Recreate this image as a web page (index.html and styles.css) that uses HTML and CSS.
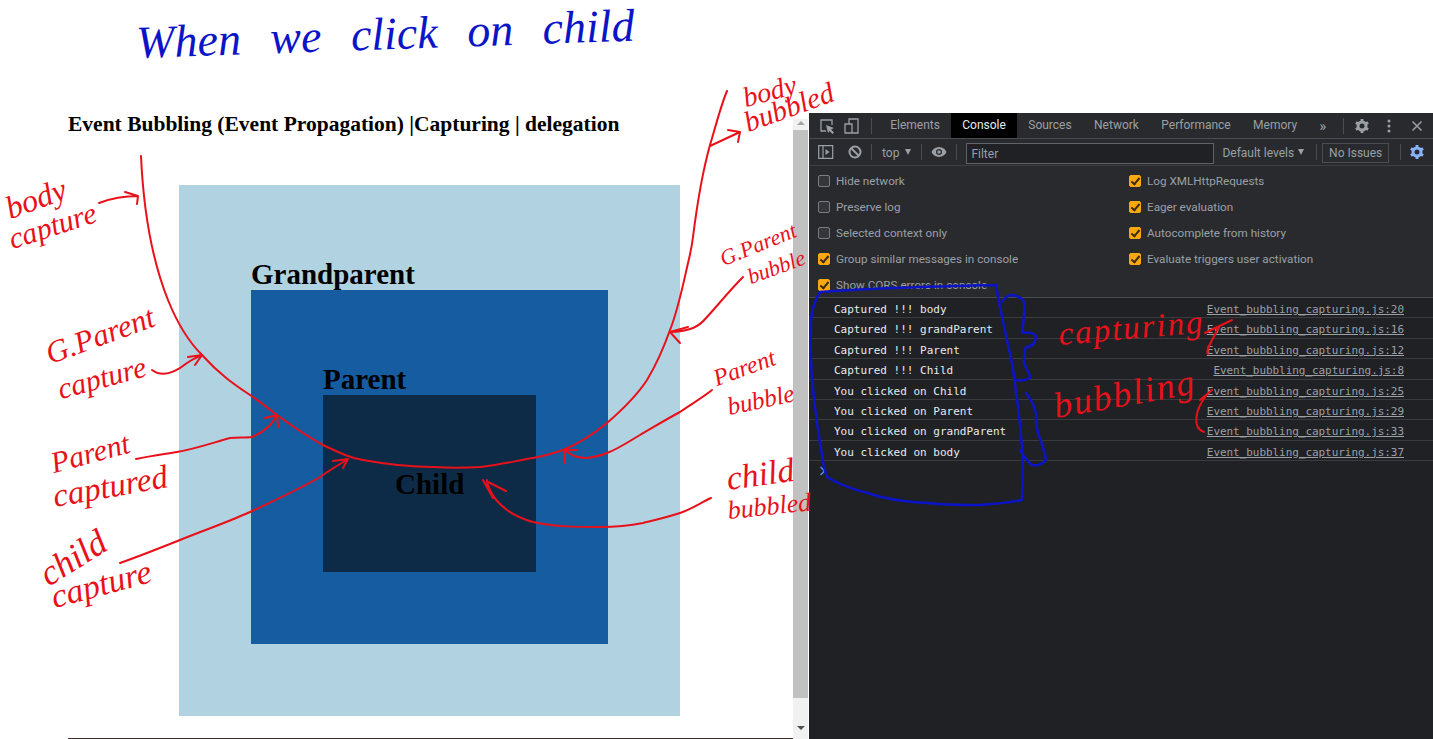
FILE: index.html
```html
<!DOCTYPE html>
<html lang="en">
<head>
    <meta charset="UTF-8">
    <title>Event Bubbling</title>
    <link rel="stylesheet" href="styles.css">
</head>
<body>

    <!-- Demo page -->
    <div class="page">
        <h1>Event Bubbling (Event Propagation) |Capturing | delegation</h1>
        <div class="box grandparent">
            <h2>Grandparent</h2>
            <div class="box parent">
                <h2>Parent</h2>
                <div class="box child">
                    <h2>Child</h2>
                </div>
            </div>
        </div>
        <div class="page-end"></div>
    </div>

    <div class="scrollbar">
        <div class="scroll-arrow up"></div>
        <div class="scroll-thumb"></div>
        <div class="scroll-arrow down"></div>
    </div>

    <!-- Devtools -->
    <div class="devtools">
        <div class="toolbar tabs-bar">
            <svg class="icon inspect" width="18" height="18" viewBox="0 0 18 18"><path d="M8 14H3V3h11v5" fill="none" stroke="#9aa0a6" stroke-width="1.3"/><path d="M8 8l8 3-3 1.5 3 3-1.5 1.500-3-3L10 16z" fill="#9aa0a6"/></svg>
            <svg class="icon device" width="18" height="18" viewBox="0 0 18 18"><path d="M6 7V2h9v14H2V7h7v9" fill="none" stroke="#9aa0a6" stroke-width="1.300"/></svg>
            <span class="sep first"></span>
            <span class="tab">Elements</span>
            <span class="tab active">Console</span>
            <span class="tab">Sources</span>
            <span class="tab">Network</span>
            <span class="tab">Performance</span>
            <span class="tab">Memory</span>
            <span class="more">&raquo;</span>
            <span class="sep"></span>
            <svg class="icon cog" width="16" height="16" viewBox="0 0 16 16"><circle cx="8" cy="8" r="4" fill="none" stroke="#9aa0a6" stroke-width="3"/><path d="M8 1v3M8 12v3M1.900 4.500l2.600 1.500M11.500 10l2.600 1.500M1.900 11.500l2.600-1.500M11.500 6l2.600-1.500" stroke="#9aa0a6" stroke-width="2.800"/></svg>
            <svg class="icon dots" width="4" height="14" viewBox="0 0 4 14"><circle cx="2" cy="2" r="1.500" fill="#9aa0a6"/><circle cx="2" cy="7" r="1.500" fill="#9aa0a6"/><circle cx="2" cy="12" r="1.500" fill="#9aa0a6"/></svg>
            <svg class="icon close" width="12" height="12" viewBox="0 0 12 12"><path d="M1.500 1.500l9 9M10.500 1.500l-9 9" stroke="#9aa0a6" stroke-width="1.500"/></svg>
        </div>

        <div class="toolbar filter-bar">
            <svg class="icon sidebar" width="16" height="14" viewBox="0 0 16 14"><path d="M.7.700h14v12.600H.7zM5 .7v12.600" fill="none" stroke="#9aa0a6" stroke-width="1.200"/><path d="M7.500 4l4 3-4 3z" fill="#9aa0a6"/></svg>
            <svg class="icon block" width="14" height="14" viewBox="0 0 14 14"><circle cx="7" cy="7" r="5.500" fill="none" stroke="#9aa0a6" stroke-width="2"/><path d="M3 3l8 8" stroke="#9aa0a6" stroke-width="2"/></svg>
            <span class="sep"></span>
            <span class="context">top</span>
            <span class="caret"></span>
            <span class="sep"></span>
            <svg class="icon eye" width="16" height="12" viewBox="0 0 16 12"><path d="M8 1C4.500 1 1.700 3.200.5 6c1.200 2.800 4 5 7.500 5s6.300-2.200 7.500-5C14.300 3.200 11.500 1 8 1z" fill="#9aa0a6"/><circle cx="8" cy="6" r="3" fill="#292a2d"/><circle cx="8" cy="6" r="1.700" fill="#9aa0a6"/></svg>
            <span class="sep"></span>
            <div class="filter">Filter</div>
            <span class="levels">Default levels</span>
            <span class="caret"></span>
            <span class="sep"></span>
            <span class="issues">No Issues</span>
            <span class="sep"></span>
            <svg class="icon cog-on" width="16" height="16" viewBox="0 0 16 16"><circle cx="8" cy="8" r="4" fill="none" stroke="#8ab4f8" stroke-width="3"/><path d="M8 1v3M8 12v3M1.900 4.500l2.600 1.500M11.500 10l2.600 1.500M1.900 11.500l2.600-1.500M11.500 6l2.600-1.500" stroke="#8ab4f8" stroke-width="2.800"/></svg>
        </div>

        <div class="settings">
            <label><i class="check"></i>Hide network</label>
            <label><i class="check on"></i>Log XMLHttpRequests</label>
            <label><i class="check"></i>Preserve log</label>
            <label><i class="check on"></i>Eager evaluation</label>
            <label><i class="check"></i>Selected context only</label>
            <label><i class="check on"></i>Autocomplete from history</label>
            <label><i class="check on"></i>Group similar messages in console</label>
            <label><i class="check on"></i>Evaluate triggers user activation</label>
            <label><i class="check on"></i>Show CORS errors in console</label>
        </div>

        <div class="messages">
            <div class="msg"><span>Captured !!! body</span><a>Event_bubbling_capturing.js:20</a></div>
            <div class="msg"><span>Captured !!! grandParent</span><a>Event_bubbling_capturing.js:16</a></div>
            <div class="msg"><span>Captured !!! Parent</span><a>Event_bubbling_capturing.js:12</a></div>
            <div class="msg"><span>Captured !!! Child</span><a>Event_bubbling_capturing.js:8</a></div>
            <div class="msg"><span>You clicked on Child</span><a>Event_bubbling_capturing.js:25</a></div>
            <div class="msg"><span>You clicked on Parent</span><a>Event_bubbling_capturing.js:29</a></div>
            <div class="msg"><span>You clicked on grandParent</span><a>Event_bubbling_capturing.js:33</a></div>
            <div class="msg"><span>You clicked on body</span><a>Event_bubbling_capturing.js:37</a></div>
            <svg class="prompt" width="7" height="10" viewBox="0 0 7 10"><path d="M1.500 1l4 4-4 4" fill="none" stroke="#4d8ff0" stroke-width="1.500"/></svg>
        </div>
    </div>

    <!-- Pen annotations drawn over the screen -->
    <svg class="strokes" width="1433" height="739" viewBox="0 0 1433 739">
        <g class="red">
            <path d="M141 156C143 200 150 255 168 300C178 325 190 343 202 355C220 375 235 385 250 395C265 405 270 410 277 415C295 428 310 438 323 445C340 453 350 458 363 460C385 464 410 467 433 467C450 468 465 468 480 467C500 465 515 461 533 458C545 456 553 453 563 450C580 443 595 433 607 423C622 410 636 397 647 380C656 365 664 347 670 330C678 310 683 285 688 263C690 255 692 245 693 237C697 205 703 170 710 145C716 125 721 105 727 91"/>
            <path d="M99 203C112 198 125 196 138 196M125 192L138 196L137 204"/>
            <path d="M152 370C160 376 172 375 187 363C193 359 198 357 202 355M188 357L202 355L195 365"/>
            <path d="M136 459C150 456 165 454 177 452C195 449 212 443 230 438C238 437 245 438 252 437C262 433 272 425 277 415M265 418L277 415L278 427"/>
            <path d="M120 563C140 556 160 548 180 540C205 530 228 522 250 512C275 500 298 490 320 477C330 470 340 464 348 459M333 461L348 459L343 468"/>
            <path d="M710 146L740 132M728 130L740 132L738 142"/>
            <path d="M743 277C730 290 718 305 707 317C702 323 698 326 693 328C685 331 678 332 670 332M688 327L670 332L680 343"/>
            <path d="M712 390C702 398 690 405 680 412C665 420 652 428 640 435C628 442 618 449 607 453C600 456 594 457 587 458C578 458 570 455 565 450M565 463L565 450L577 450"/>
            <path d="M711 498C700 503 692 509 680 513C668 517 655 520 643 523C628 526 615 527 600 527C578 527 555 527 533 522C522 519 514 515 507 510C499 504 493 497 490 490C488 486 487 483 487 480M483 480L493 498M488 482L506 491"/>
            <path d="M1205 333L1232 320M1218 328C1212 342 1205 350 1208 354M1200 400L1212 390M1206 396C1195 410 1192 428 1204 432"/>
        </g>
        <g class="blue">
            <path d="M996 285C950 286 870 288 820 292C812 305 810 320 811 330C810 350 811 365 812 380C815 410 820 445 824 467L827 477C840 485 855 490 868 493C888 500 908 502 928 503C945 505 962 505 980 505C995 504 1008 503 1022 500C1023 480 1023 465 1022 447C1020 420 1016 390 1012 363C1006 335 1000 310 996 285"/>
            <path d="M1002 302C1005 297 1008 295 1012 295C1020 296 1024 300 1024 303C1025 315 1023 325 1022 333C1028 332 1036 333 1036 337C1035 345 1030 347 1026 347C1024 352 1024 358 1024 363C1025 368 1030 372 1030 378C1025 381 1020 381 1016 380"/>
            <path d="M1026 393C1030 398 1034 405 1036 413C1036 420 1036 427 1038 433C1041 442 1045 452 1046 460C1042 465 1036 466 1032 465C1028 462 1023 455 1020 450"/>
        </g>
    </svg>

    <span class="ink blue-ink title-note">When we click on child</span>
    <span class="ink body-cap-1">body</span>
    <span class="ink body-cap-2">capture</span>
    <span class="ink gp-cap-1">G.Parent</span>
    <span class="ink gp-cap-2">capture</span>
    <span class="ink p-cap-1">Parent</span>
    <span class="ink p-cap-2">captured</span>
    <span class="ink c-cap-1">child</span>
    <span class="ink c-cap-2">capture</span>
    <span class="ink body-bub-1">body</span>
    <span class="ink body-bub-2">bubbled</span>
    <span class="ink gp-bub-1">G.Parent</span>
    <span class="ink gp-bub-2">bubble</span>
    <span class="ink p-bub-1">Parent</span>
    <span class="ink p-bub-2">bubble</span>
    <span class="ink c-bub-1">child</span>
    <span class="ink c-bub-2">bubbled</span>
    <span class="ink note-capturing">capturing</span>
    <span class="ink note-bubbling">bubbling</span>

</body>
</html>
```
FILE: styles.css
```css
html, body {
    margin: 0;
    height: 739px;
    overflow: hidden;
}
body {
    display: flex;
    background-color: white;
    font-family: "Liberation Serif", serif;
    position: relative;
}

/* demo page */
.page {
    width: 725px;
    padding: 113px 0 0 68px;
    flex-shrink: 0;
}
h1 {
    font-size: 21.500px;
    line-height: 23px;
    margin: 0 0 49px;
    color: #000;
}
h2 {
    font-size: 29px;
    line-height: 32px;
    margin: 0;
    color: #000;
}
.box {
    box-sizing: border-box;
    padding: 73px 72px 0;
}
.grandparent {
    background-color: #b1d2e0;
    width: 501px;
    height: 531px;
    margin-left: 111px;
}
.parent {
    background-color: #155ca0;
    width: 357px;
    height: 354px;
}
.child {
    background-color: #0d2b47;
    width: 213px;
    height: 177px;
}
.page-end {
    height: 1px;
    background-color: #3d2f26;
    margin-top: 22px;
}

/* page scrollbar */
.scrollbar {
    width: 15px;
    margin-top: 119px;
    height: 620px;
    background-color: #f1f1f1;
    display: flex;
    flex-direction: column;
    align-items: center;
    flex-shrink: 0;
}
.scroll-arrow {
    width: 0;
    height: 0;
    border-left: 4px solid transparent;
    border-right: 4px solid transparent;
}
.scroll-arrow.up {
    border-bottom: 4px solid #a3a3a3;
    margin: 2px 0 5px;
}
.scroll-thumb {
    width: 100%;
    height: 568px;
    background-color: #c1c1c1;
}
.scroll-arrow.down {
    border-top: 4px solid #505050;
    margin-top: 28px;
}

/* devtools */
.devtools {
    width: 624px;
    margin: 113px 0 0 1px;
    height: 626px;
    background-color: #202124;
    font-family: Roboto, sans-serif;
    font-size: 12px;
    color: #9aa0a6;
    flex-shrink: 0;
}
.toolbar {
    display: flex;
    align-items: center;
    background-color: #292a2d;
    border-bottom: 1px solid #494c50;
    box-sizing: border-box;
}
.tabs-bar {
    height: 26px;
    padding-left: 9px;
}
.filter-bar {
    height: 27px;
    padding-left: 9px;
    border-bottom-color: #3c4043;
}
.icon {
    flex-shrink: 0;
}
.device {
    margin-left: 7px;
}
.sep {
    width: 1px;
    height: 16px;
    background-color: #494c50;
    flex-shrink: 0;
}
.sep.first {
    margin: 0 7px 0 10px;
}
.tab {
    padding: 0 11.200px;
    height: 25px;
    line-height: 25px;
}
.tab.active {
    background-color: #000;
    color: #e8eaed;
}
.more {
    margin-left: 11px;
    font-size: 15px;
    line-height: 20px;
}
.more + .sep {
    margin: 0 10px 0 16.500px;
}
.dots {
    margin-left: 17px;
}
.close {
    margin-left: 20px;
}
.block {
    margin-left: 14px;
}
.filter-bar .block + .sep {
    margin: 0 10px 0 9px;
}
.context, .levels, .filter, .issues {
    position: relative;
    top: 1px;
}
.caret {
    width: 0;
    height: 0;
    border-left: 3.500px solid transparent;
    border-right: 3.500px solid transparent;
    border-top: 6px solid #9aa0a6;
    margin-left: 6px;
}
.levels + .caret {
    margin-left: 4px;
}
.context + .caret + .sep {
    margin: 0 9px 0 10px;
}
.eye + .sep {
    margin: 0 9px 0 9px;
}
.filter {
    box-sizing: border-box;
    width: 248px;
    height: 21px;
    line-height: 20px;
    padding-left: 4px;
    background-color: #202124;
    border: 1px solid #5f6368;
}
.levels {
    margin-left: 8px;
}
.levels + .caret + .sep {
    margin: 0 5px 0 12px;
}
.issues {
    box-sizing: border-box;
    width: 67px;
    height: 20px;
    line-height: 18px;
    text-align: center;
    border: 1px solid #494c50;
}
.issues + .sep {
    margin: 0 8px 0 11px;
}
.settings {
    display: grid;
    grid-template-columns: 311px 1fr;
    grid-auto-rows: 26px;
    padding: 2px 0 0 9px;
    box-sizing: border-box;
    height: 132px;
    border-bottom: 1px solid #494c50;
    background-color: #292a2d;
    font-size: 11.700px;
}
.settings label {
    display: flex;
    align-items: center;
    color: #9aa0a6;
}
.check {
    box-sizing: border-box;
    width: 12px;
    height: 12px;
    margin-right: 6px;
    border: 1px solid #7a7d82;
    border-radius: 2px;
    background-color: #35363a;
    position: relative;
}
.check.on {
    background-color: #f9a80f;
    border-color: #f9a80f;
}
.check.on::after {
    content: "";
    position: absolute;
    left: 3px;
    top: 0;
    width: 3px;
    height: 7px;
    border: solid #3b2c10;
    border-width: 0 2px 2px 0;
    transform: rotate(40deg);
}
.messages {
    font-family: "DejaVu Sans Mono", monospace;
    font-size: 11px;
    position: relative;
}
.msg {
    display: flex;
    justify-content: space-between;
    height: 20.400px;
    line-height: 24px;
    box-sizing: border-box;
    padding: 0 29px 0 25px;
    border-bottom: 1px solid #3a3b3e;
    color: #e8eaed;
}
.msg a {
    color: #9aa0a6;
    text-decoration: underline;
    letter-spacing: -0.050px;
}
.prompt {
    margin: 5px 0 0 10px;
    display: block;
}

/* pen annotations */
.strokes {
    position: absolute;
    left: 0;
    top: 0;
    pointer-events: none;
}
.strokes path {
    fill: none;
    stroke-width: 2;
    stroke-linecap: round;
    stroke-linejoin: round;
}
.red path {
    stroke: #e8111a;
}
.blue path {
    stroke: #0c14c8;
    stroke-width: 2.500;
}
.ink {
    position: absolute;
    font-family: "Liberation Serif", serif;
    font-style: italic;
    color: #e8111a;
    font-size: 28px;
    line-height: 1;
    white-space: nowrap;
    transform-origin: left bottom;
}
.blue-ink {
    color: #0c14c8;
}
.title-note {
    left: 137px;
    top: 20px;
    font-size: 46px;
    word-spacing: 18px;
    transform: rotate(-2deg);
}
.body-cap-1 { left: 12px; top: 192px; transform: rotate(-20deg); font-size: 32px; }
.body-cap-2 { left: 14px; top: 224px; transform: rotate(-18deg); font-size: 30px; }
.gp-cap-1 { left: 52px; top: 338px; transform: rotate(-20deg); font-size: 31px; }
.gp-cap-2 { left: 62px; top: 374px; transform: rotate(-15deg); font-size: 30px; }
.p-cap-1 { left: 55px; top: 448px; transform: rotate(-15deg); font-size: 30px; }
.p-cap-2 { left: 56px; top: 480px; transform: rotate(-10deg); font-size: 33px; }
.c-cap-1 { left: 52px; top: 556px; transform: rotate(-32deg); font-size: 36px; }
.c-cap-2 { left: 56px; top: 580px; transform: rotate(-15deg); font-size: 34px; }
.body-bub-1 { left: 747px; top: 84px; transform: rotate(-15deg); }
.body-bub-2 { left: 750px; top: 108px; transform: rotate(-20deg); font-size: 29px; }
.gp-bub-1 { left: 725px; top: 248px; transform: rotate(-22deg); font-size: 22px; }
.gp-bub-2 { left: 752px; top: 266px; transform: rotate(-20deg); font-size: 22px; }
.p-bub-1 { left: 718px; top: 366px; transform: rotate(-20deg); font-size: 24px; }
.p-bub-2 { left: 730px; top: 394px; transform: rotate(-12deg); font-size: 25px; }
.c-bub-1 { left: 729px; top: 462px; transform: rotate(-8deg); font-size: 34px; }
.c-bub-2 { left: 729px; top: 498px; transform: rotate(-6deg); font-size: 26px; }
.note-capturing { left: 1060px; top: 318px; font-size: 33px; letter-spacing: 2px; transform: rotate(-5deg); }
.note-bubbling { left: 1057px; top: 388px; font-size: 36px; letter-spacing: 2px; transform: rotate(-10deg); }
```
